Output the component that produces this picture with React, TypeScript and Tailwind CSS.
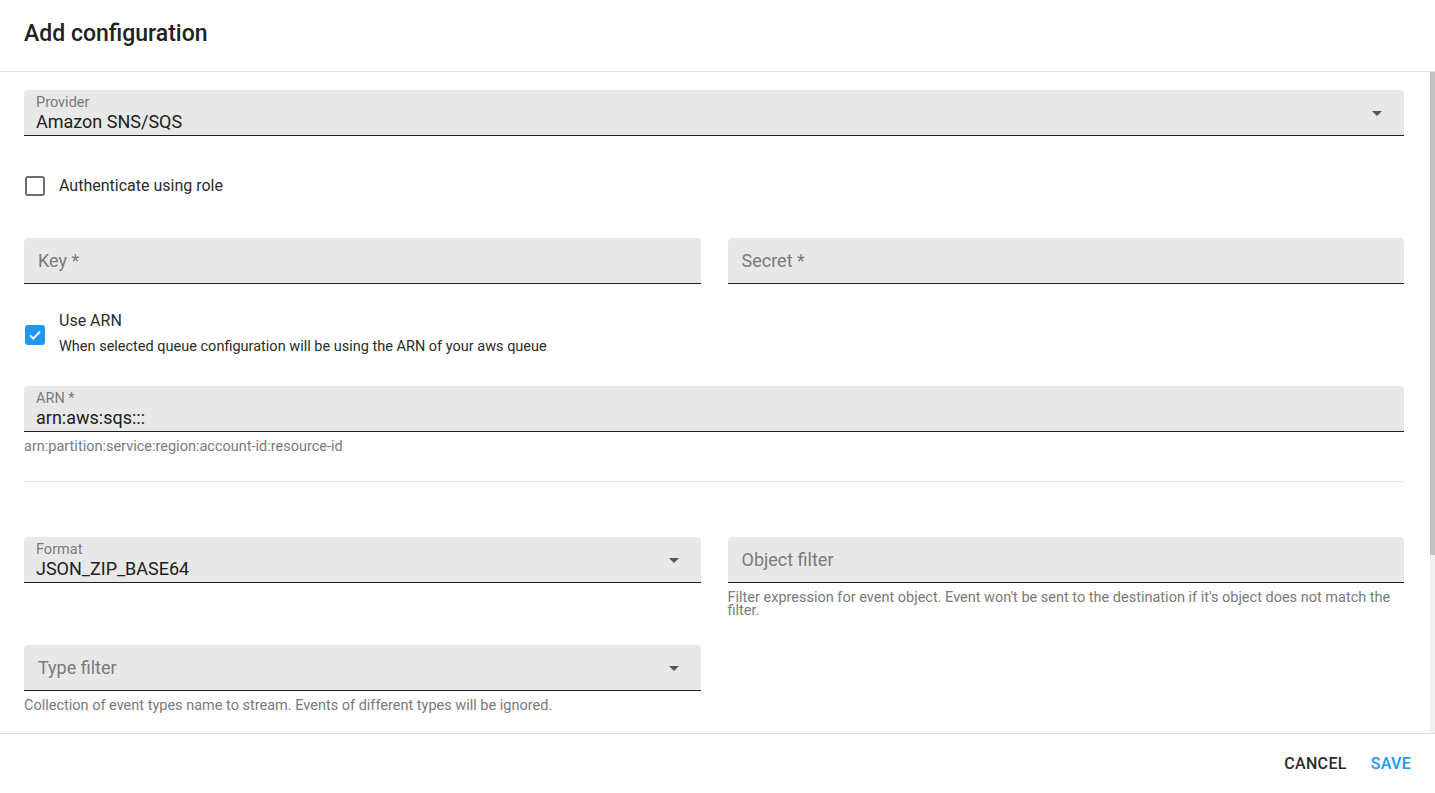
import React from 'react';

const font = { fontFamily: 'Roboto, "Liberation Sans", sans-serif' };

const Arrow = () => (
    <svg width="24" height="24" viewBox="0 0 24 24" className="shrink-0 text-[#555]">
        <path d="M7 10l5 5 5-5z" fill="currentColor" />
    </svg>
);

const FilledField: React.FC<{ label?: string; value?: string; placeholder?: string; select?: boolean }> = ({
    label,
    value,
    placeholder,
    select,
}) => (
    <div className="flex h-[46px] items-center rounded-t-[4px] border-b border-[#1f1f1f] bg-[#e8e8e8] pl-3 pr-[15px]">
        <div className="flex min-w-0 flex-1 flex-col pt-[1px]">
            {value !== undefined ? (
                <>
                    <span className="text-[14.5px] leading-[16px] text-[#7a7a7a]">{label}</span>
                    <span className="mt-[1px] text-[18px] leading-[20px] text-[#212121]">{value}</span>
                </>
            ) : (
                <span className="pl-[2px] text-[18px] leading-[20px] text-[#7a7a7a]">{placeholder}</span>
            )}
        </div>
        {select && <Arrow />}
    </div>
);

export default function App() {
    return (
        <div className="flex h-[793px] flex-col bg-white" style={font}>
            <div className="flex h-[72px] shrink-0 items-center border-b border-[#e0e0e0] px-6 pb-[4px]">
                <h2 className="text-[23px] font-medium leading-none text-[#212121]">Add configuration</h2>
            </div>

            <div className="flex min-h-0 flex-1">
                <div className="min-w-0 flex-1 overflow-hidden pl-6 pr-[26px]">
                    <div className="pt-[18px]">
                        <FilledField label="Provider" value="Amazon SNS/SQS" select />
                    </div>

                    <label className="mt-[29px] flex h-[42px] items-center">
                        <span className="ml-[1px] h-[20px] w-[20px] rounded-[3px] border-2 border-[#6e6e6e]" />
                        <span className="ml-[14px] text-[16px] text-[#2b2b2b]">Authenticate using role</span>
                    </label>

                    <div className="mt-[31px] grid grid-cols-2 gap-[27px]">
                        <FilledField placeholder="Key *" />
                        <FilledField placeholder="Secret *" />
                    </div>

                    <div className="mt-[27px] flex items-start">
                        <span className="ml-[1px] mt-[14px] flex h-[20px] w-[20px] items-center justify-center rounded-[3px] bg-[#2196f3]">
                            <svg width="16" height="16" viewBox="0 0 24 24">
                                <path d="M4.5 12.5l5 5L19.5 7" stroke="white" strokeWidth="3" fill="none" />
                            </svg>
                        </span>
                        <div className="ml-[14px] flex flex-col">
                            <span className="text-[16px] leading-[20px] text-[#2b2b2b]">Use ARN</span>
                            <span className="mt-[7px] text-[14.5px] leading-[18px] text-[#2b2b2b]">
                                When selected queue configuration will be using the ARN of your aws queue
                            </span>
                        </div>
                    </div>

                    <div className="mt-[30px]">
                        <FilledField label="ARN *" value="arn:aws:sqs:::" />
                        <div className="mt-[7px] text-[14.5px] leading-[16px] text-[#7a7a7a]">
                            arn:partition:service:region:account-id:resource-id
                        </div>
                    </div>

                    <div className="mt-[26px] h-px bg-[#e0e0e0]" />

                    <div className="mt-[55px] grid grid-cols-2 items-start gap-x-[27px]">
                        <FilledField label="Format" value="JSON_ZIP_BASE64" select />
                        <div>
                            <FilledField placeholder="Object filter" />
                            <div className="mt-[8px] text-[14.5px] leading-[13px] text-[#7a7a7a]">
                                Filter expression for event object. Event won't be sent to the destination if it's object does not match the filter.
                            </div>
                        </div>
                    </div>

                    <div className="mt-[28px] grid grid-cols-2 gap-x-[27px]">
                        <div>
                            <FilledField placeholder="Type filter" select />
                            <div className="mt-[7px] text-[14.5px] leading-[16px] text-[#7a7a7a]">
                                Collection of event types name to stream. Events of different types will be ignored.
                            </div>
                        </div>
                    </div>
                </div>

                <div className="w-[5px] shrink-0 bg-[#f1f1f1]">
                    <div className="h-[483px] w-full bg-[#c1c1c1]" />
                </div>
            </div>

            <div className="flex h-[60px] shrink-0 items-center justify-end gap-[8px] border-t border-[#e0e0e0] pr-[16px]">
                <button className="px-2 py-[6px] text-[16px] font-medium uppercase tracking-[0.02em] text-[#2b2b2b]">
                    Cancel
                </button>
                <button className="px-2 py-[6px] text-[16px] font-medium uppercase tracking-[0.02em] text-[#2196f3]">
                    Save
                </button>
            </div>
        </div>
    );
}
